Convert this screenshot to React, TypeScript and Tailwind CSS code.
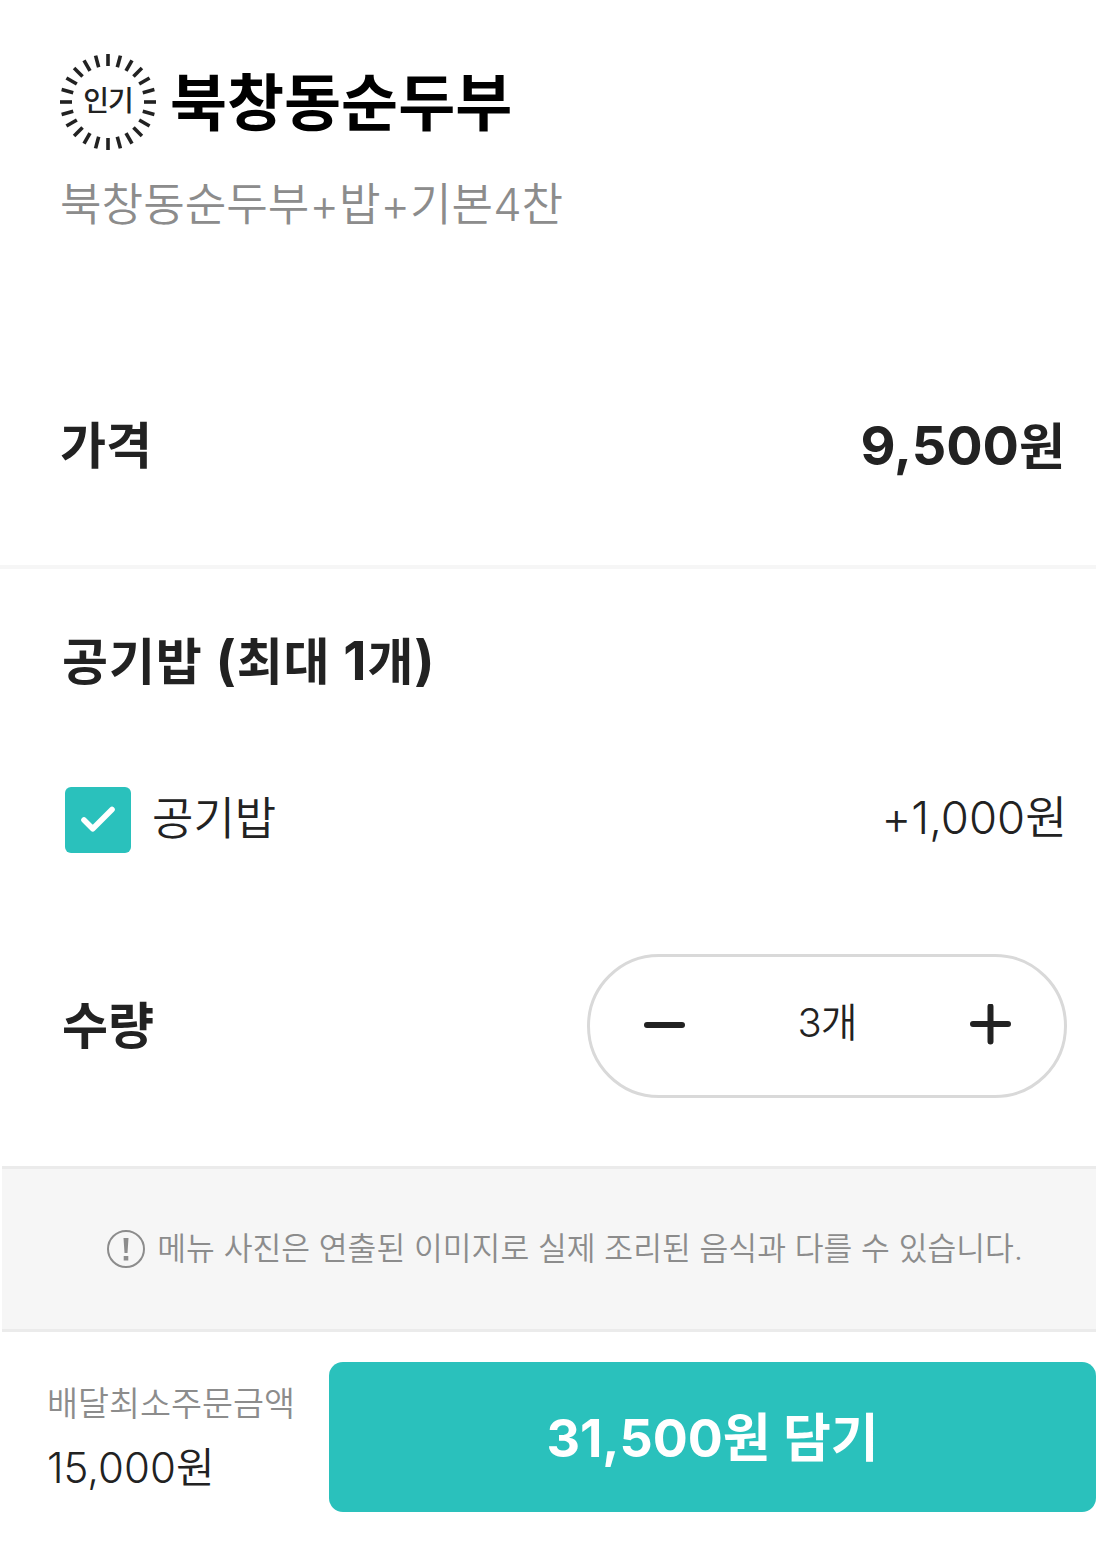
import { Check } from 'lucide-react';

const font = { fontFamily: 'Inter, "Noto Sans CJK KR", "Noto Sans", sans-serif' };

function PopularBadge() {
  // 24 ticks around the circle
  const ticks = [...Array(24)].map((_, i) => i * 15);
  return (
    <div className="relative w-[96px] h-[96px] shrink-0">
      <svg viewBox="0 0 96 96" className="w-[96px] h-[96px]">
        {ticks.map((deg) => (
          <line
            key={deg}
            x1="48"
            y1="0"
            x2="48"
            y2="12"
            stroke="#222"
            strokeWidth="3.6"
            transform={`rotate(${deg} 48 48)`}
          />
        ))}
      </svg>
      <span className="absolute inset-0 flex items-center justify-center pb-[2px] text-[28px] font-medium tracking-[-1px] text-[#222] leading-none">
        인기
      </span>
    </div>
  );
}

export default function App() {
  return (
    <main style={font} className="w-[1096px] h-[1561px] bg-white flex flex-col text-[#222] overflow-hidden">
      {/* 메뉴 정보 */}
      <div className="h-[565px] pl-[60px] pr-[31px] pt-[54px] flex flex-col">
        <div className="flex items-center gap-[14px]">
          <PopularBadge />
          <h1 className="text-[62px] font-bold leading-none text-black pt-[4px]">북창동순두부</h1>
        </div>
        <p className="text-[45.2px] leading-none text-[#8c8c8c] mt-[32px] font-[350]">북창동순두부+밥+기본4찬</p>
        <div className="flex justify-between items-center mt-[192px]">
          <span className="text-[50px] font-bold leading-none">가격</span>
          <span className="text-[50px] font-bold leading-none">
            <span className="text-[54px]">9,500</span>원
          </span>
        </div>
      </div>

      <div className="h-[4px] bg-[#f6f6f6]" />

      {/* 옵션 */}
      <div className="h-[597px] pl-[62px] pr-[30px] flex flex-col">
        <h2 className="h-[50px] text-[50px] font-bold leading-none mt-[65px] tracking-[0.9px]">
          공기밥 <span className="text-[54px]">(</span>최대 <span className="text-[54px]">1</span>개<span className="text-[54px]">)</span>
        </h2>
        <div className="flex items-center justify-between mt-[103px] pl-[3px] mr-[-1px]">
          <div className="flex items-center gap-[21px]">
            <div className="w-[66px] h-[66px] rounded-[6px] bg-[#2ac1bc] flex items-center justify-center">
              <Check className="w-[42px] h-[42px] text-white" strokeWidth={3.2} />
            </div>
            <span className="text-[45px] leading-none font-[350] pb-[3px]">공기밥</span>
          </div>
          <span className="text-[45.5px] leading-none font-[350] pb-[5px]">+1,000원</span>
        </div>
        <div className="flex items-center justify-between mt-[101px]">
          <span className="text-[50px] font-bold leading-none">수량</span>
          <div className="w-[480px] h-[144px] rounded-full border-[3px] border-[#d9d9d9] flex items-center justify-between pl-[52px] pr-[52px] mr-[-1px]">
            <svg viewBox="0 0 44 44" className="w-[44px] h-[44px]">
              <path d="M5 21H40" stroke="#222" strokeWidth="6" strokeLinecap="round" />
            </svg>
            <span className="text-[40px] leading-none tracking-[-1px] font-[350] pb-[6px]">3개</span>
            <svg viewBox="0 0 44 44" className="w-[44px] h-[44px]">
              <path d="M5 20H40M22.5 2.5V37.5" stroke="#222" strokeWidth="6" strokeLinecap="round" />
            </svg>
          </div>
        </div>
      </div>

      {/* 안내 문구 */}
      <div className="ml-[2px] h-[166px] bg-[#f6f6f6] border-y-[3px] border-[#ebebeb] flex items-center justify-center gap-[12px] pl-[32px]">
        <svg viewBox="0 0 38 38" className="w-[38px] h-[38px]">
          <circle cx="19" cy="19" r="18" fill="none" stroke="#8c8c8c" strokeWidth="2" />
          <path d="M16.5 8H21.5L20.5 23H17.5Z M16.7 26H21.3V30.5H16.7Z" fill="#8c8c8c" />
        </svg>
        <p className="text-[31.3px] leading-none text-[#8c8c8c] font-[350] pt-[2px]">메뉴 사진은 연출된 이미지로 실제 조리된 음식과 다를 수 있습니다.</p>
      </div>

      {/* 하단 주문 */}
      <div className="flex items-start pl-[47px] pt-[30px]">
        <div className="w-[282px] pt-[25px]">
          <p className="text-[33.7px] leading-none text-[#8c8c8c] font-[350]">배달최소주문금액</p>
          <p className="text-[42px] leading-none mt-[26px] font-[350]">15,000원</p>
        </div>
        <button className="flex-1 h-[150px] rounded-[14px] bg-[#2ac1bc] text-white text-[52px] font-bold leading-none pt-[4px]">
          31,500원 담기
        </button>
      </div>
    </main>
  );
}
